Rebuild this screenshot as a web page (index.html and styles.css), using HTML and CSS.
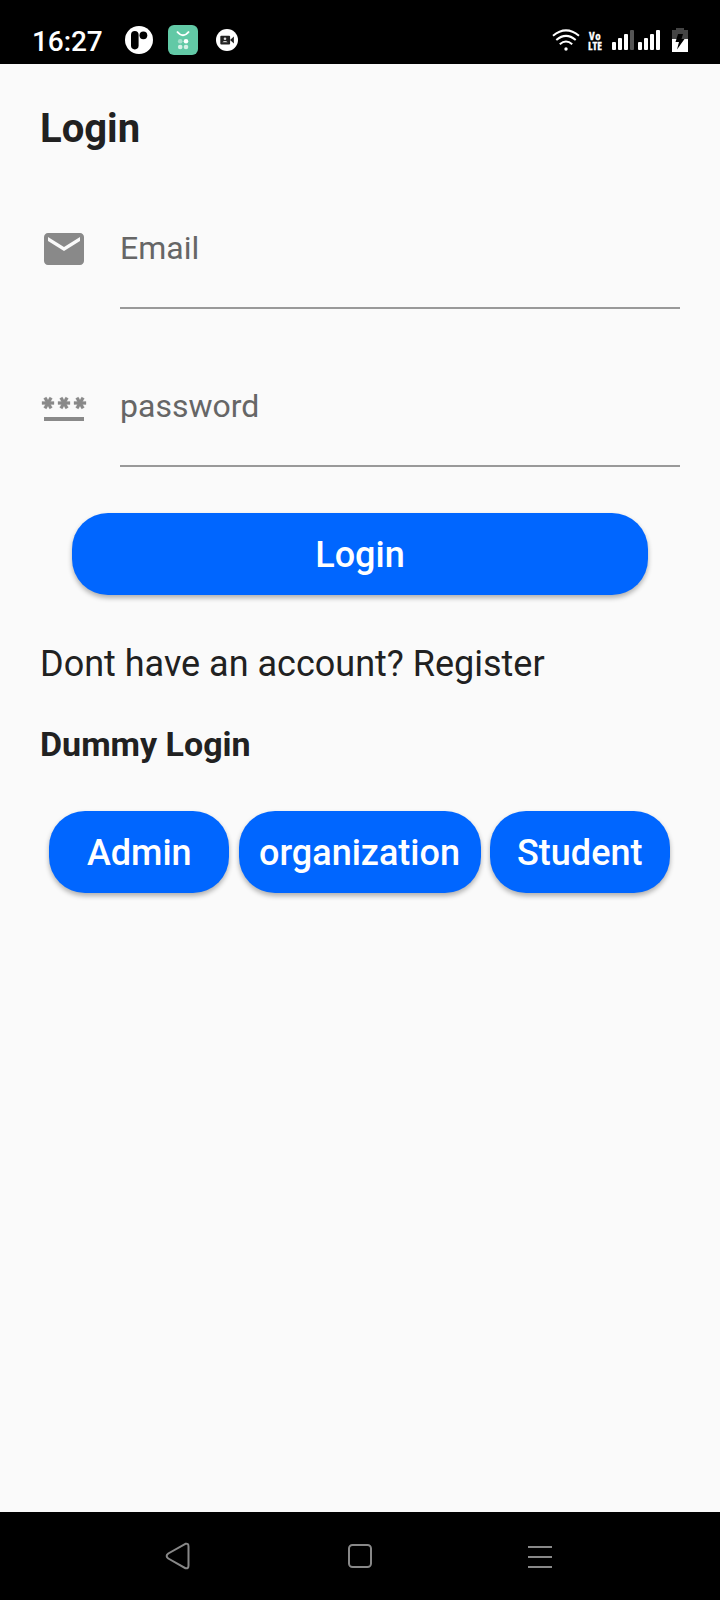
FILE: index.html
```html
<!DOCTYPE html>
<html lang="en">
<head>
<meta charset="utf-8">
<title>Login</title>
<link rel="stylesheet" href="styles.css">
</head>
<body>
<div class="screen">
  <header class="status">
    <div class="status-left">
      <span class="clock">16:27</span>
      <svg class="ico-p" width="28" height="28" viewBox="0 0 28 28"><circle cx="14" cy="14" r="14" fill="#fff"/><rect x="6" y="5" width="7.6" height="18.4" rx="3.8"/><circle cx="18.4" cy="9.3" r="3.9"/></svg>
      <svg class="ico-bag" width="30" height="30" viewBox="0 0 30 30"><rect width="30" height="30" rx="6" fill="#62c9a6"/><path d="M9 6.500Q15 14 21 6.500" fill="none" stroke="#fff" stroke-width="1.900"/><circle cx="12.200" cy="16.300" r="2.300" fill="#a5e0cc"/><circle cx="18" cy="16.300" r="2.300" fill="#fff"/><circle cx="12.200" cy="22" r="2.300" fill="#d5f1e7"/><circle cx="18" cy="22" r="2.300" fill="#d5f1e7"/></svg>
      <svg class="ico-cam" width="22" height="22" viewBox="0 0 22 22"><circle cx="11" cy="11" r="11" fill="#fff"/><rect x="4.300" y="6.800" width="9.800" height="8.800" rx="1" fill="#222"/><path d="M14 11l3.900-3.400v7z" fill="#222"/><circle cx="9" cy="9.800" r="1.300" fill="#ddd"/><path d="M6.300 13.300q2.700-2.600 5.400 0z" fill="#ddd"/></svg>
    </div>
    <div class="status-right">
      <svg width="28" height="22" viewBox="0 0 28 22" fill="none" stroke="#fff" stroke-width="2"><path d="M1 6.700Q14-4 27 6.700M4.300 11Q14 2.800 23.700 11M7.800 15.300Q14 9.800 20.200 15.300"/><circle cx="14" cy="20" r="1.700" fill="#fff" stroke="none"/></svg>
      <span class="volte"><span class="volte-top">Vo</span><span>LTE</span></span>
      <svg class="signal" width="48" height="20" viewBox="0 0 48 20" fill="#fff"><rect y="12" width="4" height="8" rx="1"/><rect x="6" y="8" width="4" height="12" rx="1"/><rect x="12" y="4" width="4" height="16" rx="1"/><rect x="18" width="4" height="20" rx="1" fill="#555"/><rect x="26" y="12" width="4" height="8" rx="1"/><rect x="32" y="8" width="4" height="12" rx="1"/><rect x="38" y="4" width="4" height="16" rx="1"/><rect x="44" width="4" height="20" rx="1"/></svg>
      <svg class="battery" width="16" height="24" viewBox="0 0 16 24"><path d="M4 0h8v2h4v9H0V2h4z" fill="#444"/><path d="M0 11h16v13H0z" fill="#fff"/><path d="M6 6h5L9.500 11H12.500L5 21.500 7 14H3.500z"/></svg>
    </div>
  </header>

  <main class="content">
    <h1 class="title">Login</h1>
    <form class="form">
      <label class="field">
        <svg class="field-icon" viewBox="0 0 24 24"><path d="M20 4H4c-1.100 0-1.990.9-1.990 2L2 18c0 1.100.9 2 2 2h16c1.100 0 2-.9 2-2V6c0-1.100-.9-2-2-2zm0 4l-8 5-8-5V6l8 5 8-5v2z"/></svg>
        <span class="field-label">Email</span>
      </label>
      <label class="field">
        <svg class="field-icon" viewBox="0 0 24 24"><path d="M2 17h20v2H2z"/><path class="stars" d="M3.150 12.950L4 11.470l.85 1.480 1.300-.75-.85-1.480H7v-1.500H5.300l.85-1.470L4.850 7 4 8.470 3.150 7l-1.300.75.85 1.470H1v1.500h1.700l-.85 1.480 1.300.75zm6.700-.75l1.300.75.85-1.480.85 1.480 1.300-.75-.85-1.480H15v-1.500h-1.700l.85-1.470-1.300-.75L12 8.470 11.150 7l-1.300.75.85 1.470H9v1.500h1.700l-.85 1.480zM23 9.220h-1.700l.85-1.470-1.300-.75L20 8.470 19.150 7l-1.300.75.85 1.470H17v1.500h1.700l-.85 1.480 1.300.75.85-1.480.85 1.480 1.300-.75-.85-1.480H23v-1.500z"/></svg>
        <span class="field-label">password</span>
      </label>
      <button class="btn btn-wide" type="button">Login</button>
    </form>
    <p class="register">Dont have an account? Register</p>
    <h2 class="subtitle">Dummy Login</h2>
    <div class="btn-row">
      <button class="btn" type="button">Admin</button>
      <button class="btn btn-mid" type="button">organization</button>
      <button class="btn" type="button">Student</button>
    </div>
  </main>

  <nav class="navbar">
    <svg viewBox="0 0 28 28"><path d="M19.400 1.800 2.300 11.500Q-1 14 2.300 16.500L19.400 26.200Q22.500 27 22.500 23.500V4.500Q22.500 1 19.400 1.800z"/></svg>
    <svg viewBox="0 0 28 28"><rect x="3" y="3" width="22" height="22" rx="3.500"/></svg>
    <svg viewBox="0 0 28 28"><path d="M2 5h24M2 15h24M2 25h24"/></svg>
  </nav>
</div>
</body>
</html>
```
FILE: styles.css
```css
* { box-sizing: border-box; }
body { margin: 0; font-family: Roboto, sans-serif; color: #212121; }
.screen { width: 720px; height: 1600px; display: flex; flex-direction: column; background: #fafafa; }
.status { height: 64px; background: #000; color: #fff; display: flex; justify-content: space-between; padding: 0 32px; }
.status-left, .status-right { display: flex; align-items: flex-start; }
.clock { width: 70px; margin: 25px 23px 0 0; font-size: 28px; line-height: 34px; font-weight: 500; letter-spacing: -.1px; }
.ico-p { margin-top: 26px; }
.ico-bag { margin: 25px 0 0 15px; }
.ico-cam { margin: 29px 0 0 18px; }
.status-right > svg:first-child { margin-top: 29px; }
.volte { display: flex; flex-direction: column; align-items: center; width: 14px; margin: 31px 0 0 8px; font: bold 11px/9.5px "Open Sans", sans-serif; font-stretch: 75%; -webkit-text-stroke: .3px #fff; }
.volte-top { letter-spacing: .4px; }
.signal { margin: 30px 0 0 10px; }
.battery { margin: 28px 0 0 12px; }

.content { flex: 1; padding: 41px 40px 0; }
.title { margin: 0; font-size: 40px; line-height: 48px; font-weight: 700; }
.form { padding-top: 27px; }
.field { display: flex; height: 158px; }
.field-icon { width: 48px; height: 48px; margin: 45px 32px 0 0; fill: #898989; }
.stars { stroke: #898989; stroke-width: .15; }
.field-label { flex: 1; height: 129px; padding-top: 49px; font-size: 32px; line-height: 38px; color: #666; border-bottom: 2px solid #999; }
.btn { width: 180px; height: 82px; padding: 2px 0 0; border: 0; border-radius: 36px; background: #0066ff; color: #fff; font: 500 36px/42px Roboto, sans-serif; box-shadow: 0 3px 5px rgba(0,0,0,.3); }
.btn-wide { display: block; width: 576px; margin: 17px auto 0; }
.btn-mid { width: 242px; }
.register { margin: 48px 0 0; font-size: 36px; line-height: 42px; }
.subtitle { margin: 39px 0 0; font-size: 34px; line-height: 40px; font-weight: 700; }
.btn-row { display: flex; justify-content: space-evenly; margin: 47px 1px 0 0; }

.navbar { height: 88px; background: #000; display: grid; grid-template-columns: repeat(3, 180px); justify-content: center; justify-items: center; align-items: center; }
.navbar svg { width: 28px; height: 28px; overflow: visible; fill: none; stroke: #888; stroke-width: 2; }
```
